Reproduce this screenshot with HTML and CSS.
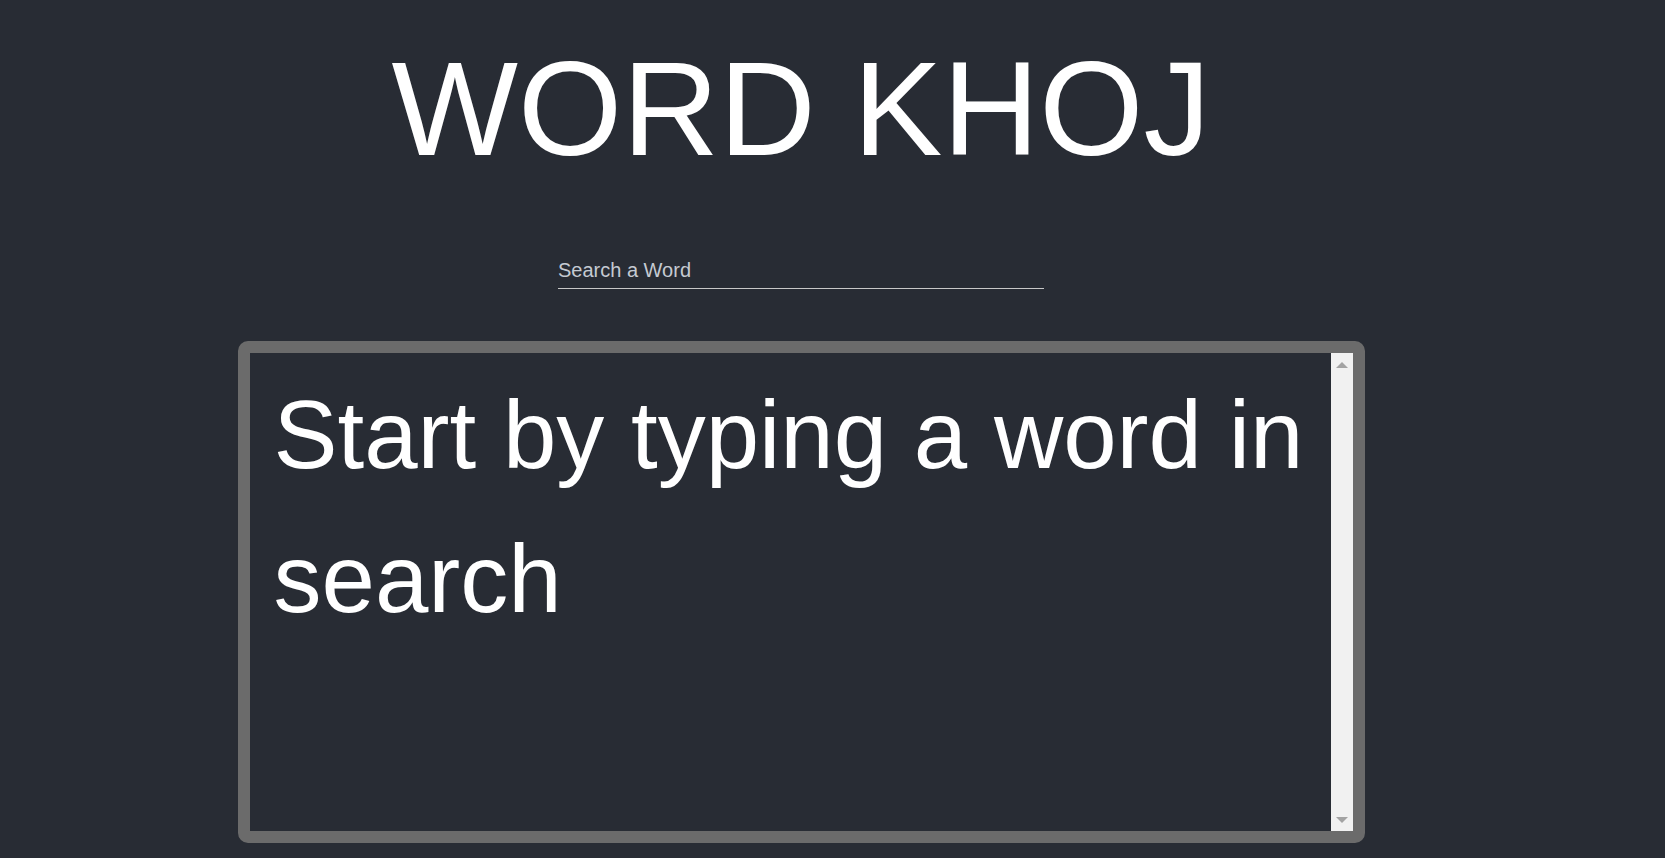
FILE: index.html
```html
<!DOCTYPE html>
<html lang="en">
<head>
<meta charset="utf-8">
<title>Word Khoj</title>
<link rel="stylesheet" href="styles.css">
</head>
<body>
<div class="app">
  <h1 class="title">WORD KHOJ</h1>
  <div class="search-row">
    <input class="search" type="text" placeholder="Search a Word">
  </div>
  <div class="result-box">
    <div class="result-text">Start by typing a word in search</div>
    <div class="scrollbar">
      <span class="arrow arrow-up"></span>
      <span class="arrow arrow-down"></span>
    </div>
  </div>
</div>
</body>
</html>
```
FILE: styles.css
```css
html, body {
  margin: 0;
  padding: 0;
  background: #282c34;
  height: 100%;
  overflow: hidden;
}
body {
  font-family: "Liberation Sans", Arial, sans-serif;
  color: #ffffff;
}
.app {
  width: 1602px;
  display: flex;
  flex-direction: column;
  align-items: center;
}
.title {
  margin: 34px 0 0;
  font-size: 134px;
  line-height: 150px;
  font-weight: normal;
  color: #ffffff;
}
.search-row {
  margin-top: 74px;
  display: flex;
}
.search {
  width: 486px;
  box-sizing: border-box;
  font-family: "Liberation Sans", Arial, sans-serif;
  font-size: 20px;
  line-height: 24px;
  height: 31px;
  padding: 0 0 6px 0;
  margin: 0;
  border: none;
  border-bottom: 1px solid #c8c8c8;
  background: transparent;
  color: #ffffff;
  outline: none;
}
.search::placeholder {
  color: #c5cad2;
  opacity: 1;
}
.result-box {
  margin-top: 52px;
  width: 1127px;
  height: 502px;
  box-sizing: border-box;
  border: 12px solid #6b6b6b;
  border-radius: 10px;
  display: flex;
}
.result-text {
  flex: 1;
  padding: 10px 10px 0 24px;
  font-size: 96px;
  line-height: 144px;
  color: #ffffff;
}
.scrollbar {
  width: 22px;
  background: #f1f1f1;
  display: flex;
  flex-direction: column;
  justify-content: space-between;
  align-items: center;
  padding: 9px 0 8px;
}
.arrow {
  width: 0;
  height: 0;
  border-left: 6px solid transparent;
  border-right: 6px solid transparent;
}
.arrow-up {
  border-bottom: 6px solid #a3a3a3;
}
.arrow-down {
  border-top: 6px solid #a3a3a3;
}
```
